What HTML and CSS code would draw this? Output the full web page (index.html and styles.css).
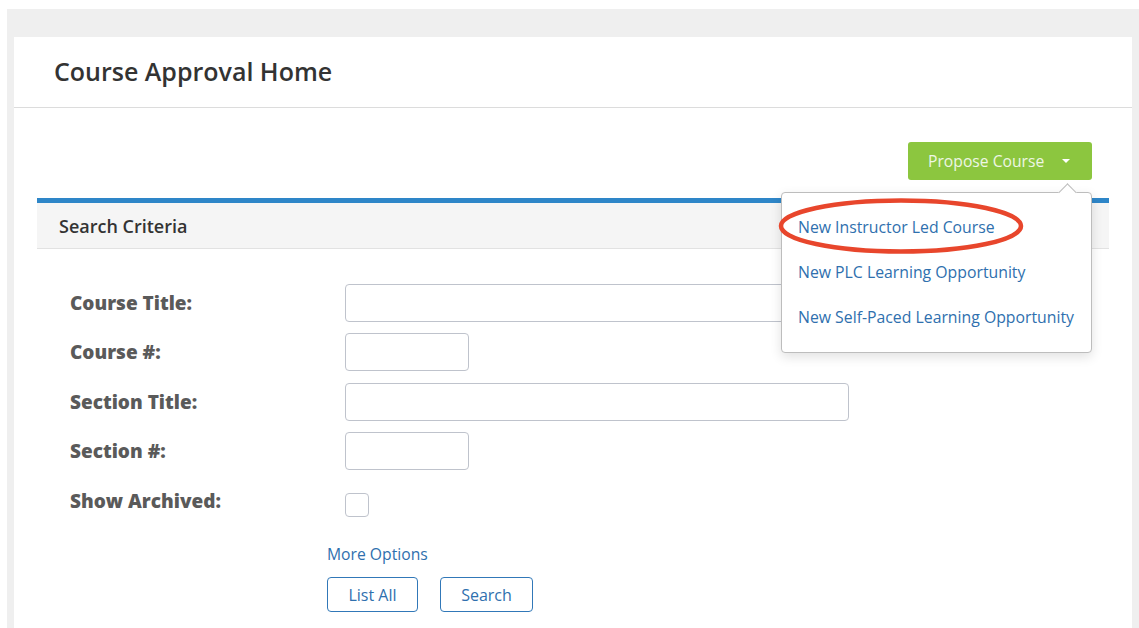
FILE: index.html
```html
<!DOCTYPE html>
<html lang="en">
<head>
<meta charset="utf-8">
<title>Course Approval Home</title>
<link rel="stylesheet" href="styles.css">
</head>
<body>
<div class="page">
  <div class="panel">
    <div class="panel-header">
      <h1 class="panel-title">Course Approval Home</h1>
    </div>
    <div class="panel-body">
      <div class="toolbar">
        <div class="btn-group">
          <button class="btn-propose" type="button">Propose Course <span class="caret"></span></button>
          <div class="dropdown">
            <a class="dropdown-item" href="#">New Instructor Led Course</a>
            <a class="dropdown-item" href="#">New PLC Learning Opportunity</a>
            <a class="dropdown-item" href="#">New Self-Paced Learning Opportunity</a>
            <svg class="highlight" width="250" height="60" viewBox="0 0 250 60">
              <ellipse cx="124" cy="30" rx="120" ry="25.5" fill="none" stroke="#e8462c" stroke-width="4.5"/>
            </svg>
          </div>
        </div>
      </div>

      <div class="section">
        <div class="section-header">Search Criteria</div>
        <form class="criteria">
          <div class="row">
            <label class="label">Course Title:</label>
            <input class="input input-wide" type="text">
          </div>
          <div class="row">
            <label class="label">Course #:</label>
            <input class="input input-short" type="text">
          </div>
          <div class="row">
            <label class="label">Section Title:</label>
            <input class="input input-wide" type="text">
          </div>
          <div class="row">
            <label class="label">Section #:</label>
            <input class="input input-short" type="text">
          </div>
          <div class="row">
            <label class="label">Show Archived:</label>
            <span class="checkbox"></span>
          </div>
          <div class="actions">
            <a class="more-link" href="#">More Options</a>
            <div class="buttons">
              <button class="btn-outline btn-list" type="button">List All</button>
              <button class="btn-outline btn-search" type="button">Search</button>
            </div>
          </div>
        </form>
      </div>
    </div>
  </div>
</div>
</body>
</html>
```

FILE: styles.css
```css
* { box-sizing: border-box; }

html, body {
  margin: 0;
  height: 100%;
  background: #fff;
  font-family: "Open Sans", "Liberation Sans", sans-serif;
  overflow: hidden;
}

.page {
  margin: 9px 0 0 7px;
  padding: 28px 7px 0 7px;
  background: #efefef;
  height: calc(100% - 9px);
}

.panel {
  background: #fff;
  height: 100%;
}

.panel-header {
  height: 71px;
  border-bottom: 1px solid #dcdcdc;
  padding: 0 0 2px 40px;
  display: flex;
  align-items: center;
}

.panel-title {
  margin: 0;
  font-size: 25px;
  font-weight: 600;
  color: #333;
}

.panel-body {
  padding: 0 23px;
}

.toolbar {
  display: flex;
  justify-content: flex-end;
  padding: 34px 17px 18px 0;
}

.btn-group {
  position: relative;
}

.btn-propose {
  display: flex;
  align-items: center;
  height: 38px;
  width: 184px;
  padding: 0 0 0 20px;
  border: 0;
  border-radius: 3px;
  background: #8cc63f;
  color: #eef6e4;
  font-family: inherit;
  font-size: 15.7px;
}

.caret {
  display: inline-block;
  margin-left: 18px;
  border-left: 4px solid transparent;
  border-right: 4px solid transparent;
  border-top: 4px solid #fff;
}

.dropdown {
  position: absolute;
  top: calc(100% + 12px);
  right: 0;
  width: 311px;
  padding: 12px 0;
  background: #fff;
  border: 1px solid #bdbdbd;
  border-radius: 4px;
  box-shadow: 0 4px 12px rgba(0, 0, 0, 0.12);
  z-index: 5;
}

.dropdown::before {
  content: "";
  position: absolute;
  top: -7px;
  right: 17px;
  width: 12px;
  height: 12px;
  background: #fff;
  border-left: 1px solid #bdbdbd;
  border-top: 1px solid #bdbdbd;
  transform: rotate(45deg);
}

.dropdown-item {
  display: block;
  height: 45px;
  line-height: 45px;
  padding-left: 16px;
  color: #2f70ae;
  font-size: 15.8px;
  text-decoration: none;
  white-space: nowrap;
}

.highlight {
  position: absolute;
  left: -5px;
  top: 3px;
}

.section {
  border-top: 5px solid #2e86c8;
}

.section-header {
  height: 46px;
  padding-left: 22px;
  display: flex;
  align-items: center;
  background: #f5f5f5;
  border-bottom: 1px solid #e2e2e2;
  font-size: 18px;
  font-weight: 600;
  color: #333;
}

.criteria {
  padding: 35px 0 0 33px;
}

.row {
  display: flex;
  align-items: center;
  height: 37px;
  margin-bottom: 12.67px;
}

.label {
  width: 275px;
  font-size: 19px;
  font-weight: 800;
  color: #5a5a5a;
}

.input {
  height: 38px;
  border: 1px solid #bfc3cc;
  border-radius: 4px;
  background: #fff;
}

.input-wide { width: 504px; }
.input-short { width: 124px; }

.checkbox {
  width: 24px;
  height: 24px;
  border: 1px solid #bfc3cc;
  border-radius: 4px;
  margin-top: 8px;
}

.actions {
  padding: 11px 0 0 257px;
}

.more-link {
  display: block;
  font-size: 15.7px;
  color: #2f70ae;
  text-decoration: none;
  line-height: 22px;
}

.buttons {
  display: flex;
  gap: 22px;
  margin-top: 12px;
}

.btn-outline {
  height: 35px;
  border: 1px solid #3178b8;
  border-radius: 4px;
  background: #fff;
  color: #2f70ae;
  font-family: inherit;
  font-size: 16px;
}

.btn-list { width: 91px; }
.btn-search { width: 93px; }
```
